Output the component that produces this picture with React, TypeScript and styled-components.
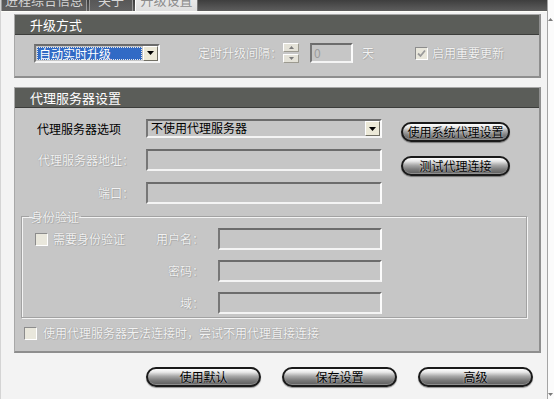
import React from 'react'
import styled, { createGlobalStyle } from 'styled-components'

const GlobalStyle = createGlobalStyle`
  html, body {
    margin: 0;
    padding: 0;
    background: #f3f3f3;
  }
  body {
    font-family: "Noto Sans CJK SC", "Noto Sans", sans-serif;
    font-size: 12px;
    line-height: 14px;
  }
`

const Window = styled.div`
  display: flex;
  width: 554px;
  height: 399px;
  overflow: hidden;
`

const Main = styled.div`
  width: 546px;
  display: flex;
  flex-direction: column;
  background: #f3f3f3;
  border-left: 1px solid #d4d4d4;
  overflow: hidden;
`

const ScrollStrip = styled.div`
  flex: 1;
  display: flex;
  flex-direction: column;
  justify-content: space-between;
  align-items: flex-end;
  padding: 18px 1px 3px 0;
  background: #fbfbfb;
  border-left: 1px solid #a4a4a4;
`

const TabBar = styled.div`
  height: 11px;
  background: linear-gradient(#3e3e3e, #5e5e5e);
  border-bottom: 1px solid #fdfdf8;
  overflow: hidden;
`

const TabRow = styled.div`
  display: flex;
  gap: 2px;
  height: 22px;
  margin-top: -11px;
`

const Tab = styled.div<{ $w: number; $active?: boolean }>`
  width: ${p => p.$w}px;
  box-sizing: border-box;
  text-align: center;
  font-size: 13px;
  line-height: 22px;
  color: ${p => (p.$active ? '#8c8c8c' : '#d6d6d6')};
  background: ${p => (p.$active ? 'linear-gradient(#f4f4f4, #dedede)' : 'linear-gradient(#4c4c4c, #626262)')};
  border-left: 1px solid ${p => (p.$active ? '#ffffff' : '#9a9a9a')};
  border-right: 1px solid ${p => (p.$active ? '#7a7a7a' : '#9a9a9a')};
`

const Content = styled.div`
  display: flex;
  flex-direction: column;
  padding: 2px 0 0 13px;
`

const Panel = styled.section`
  width: 527px;
  box-sizing: border-box;
  background: #c6c6c6;
  border-top: 1px solid #a8a8a8;
  border-left: 1px solid #a8a8a8;
  border-right: 2px solid #8e8e8e;
  border-bottom: 2px solid #8e8e8e;

  & + & {
    margin-top: 9px;
  }
`

const PanelHeader = styled.div`
  height: 19px;
  padding-left: 15px;
  background: #5b5d59;
  border-bottom: 1px solid #3c3d3b;
  color: #ffffff;
  font-size: 13px;
  line-height: 19px;
`

const UpgradeBody = styled.div`
  display: flex;
  align-items: center;
  height: 20px;
  padding: 8px 0 13px 19px;
`

const Label = styled.span<{ $disabled?: boolean }>`
  white-space: nowrap;
  font-size: 12px;
  line-height: 14px;
  color: ${p => (p.$disabled ? '#f2f2f2' : '#000000')};
  text-shadow: ${p => (p.$disabled ? '0 0 1px #8a8a8a, 1px 1px 0 #b4b4b4' : 'none')};
`

const FieldLabel = styled(Label)<{ $w: number; $left?: number }>`
  width: ${p => p.$w}px;
  box-sizing: border-box;
  text-align: ${p => (p.$left !== undefined ? 'left' : 'right')};
  padding-left: ${p => p.$left ?? 0}px;
`

const Sunken = styled.div<{ $w: number; $h?: number }>`
  width: ${p => p.$w}px;
  height: ${p => p.$h ?? 22}px;
  box-sizing: border-box;
  border-top: 2px solid #6c6c6c;
  border-left: 2px solid #777777;
  border-right: 2px solid #fbfbfb;
  border-bottom: 2px solid #f4f4f4;
  background: #c6c6c6;
`

const Combo = styled(Sunken)`
  display: flex;
  align-items: stretch;
`

const ComboText = styled.div<{ $selected?: boolean }>`
  flex: 1;
  padding-left: ${p => (p.$selected ? 2 : 3)}px;
  font-size: 12px;
  line-height: 13px;
  color: ${p => (p.$selected ? '#ffffff' : '#000000')};
  background: ${p => (p.$selected ? '#316ac5' : 'transparent')};
  outline: ${p => (p.$selected ? '1px dotted #e8e8e8' : 'none')};
  outline-offset: -1px;
  margin: ${p => (p.$selected ? '1px' : '0')};
`

const DropButton = styled.div`
  width: 15px;
  display: flex;
  align-items: center;
  justify-content: center;
  background: #ece9d8;
  border-left: 1px solid #ffffff;
  border-top: 1px solid #ffffff;
  border-right: 1px solid #716f64;
  border-bottom: 1px solid #716f64;
  box-sizing: border-box;
`

const Spinner = styled.div`
  display: flex;
  flex-direction: column;
  gap: 2px;
  width: 16px;
  margin: 0 11px 0 1px;
`

const SpinHalf = styled.div`
  height: 9px;
  display: flex;
  align-items: center;
  justify-content: center;
  background: #e4e2d8;
  border-top: 1px solid #ffffff;
  border-left: 1px solid #ffffff;
  border-right: 1px solid #9c9a90;
  border-bottom: 1px solid #9c9a90;
  box-sizing: border-box;
`

const DisabledValue = styled.div`
  padding-left: 2px;
  color: #9c9c9c;
  font-size: 12px;
  line-height: 16px;
`

const Box = styled.div`
  width: 13px;
  height: 13px;
  flex: none;
  box-sizing: border-box;
  border-top: 1px solid #8c8c8c;
  border-left: 1px solid #8c8c8c;
  border-right: 1px solid #ffffff;
  border-bottom: 1px solid #ffffff;
  background: #e9e7dc;
  display: flex;
  align-items: center;
  justify-content: center;
`

const CheckRow = styled.div<{ $gap: number }>`
  display: flex;
  align-items: center;
  gap: ${p => p.$gap}px;
`

const ProxyBody = styled.div`
  padding: 11px 0 11px 7px;
`

const ProxyTop = styled.div`
  display: flex;
`

const FieldColumn = styled.div`
  display: flex;
  flex-direction: column;
  gap: 11px;
`

const FieldRow = styled.div<{ $gap: number }>`
  display: flex;
  align-items: center;
  gap: ${p => p.$gap}px;
`

const SideButtons = styled.div`
  display: flex;
  flex-direction: column;
  gap: 14px;
  padding-top: 3px;
  margin-left: 19px;
`

const PillButton = styled.button<{ $w: number }>`
  width: ${p => p.$w}px;
  height: 20px;
  padding: 0;
  box-sizing: border-box;
  border: 2px solid #1a1a1a;
  border-radius: 10px;
  background: linear-gradient(#ffffff 0%, #e8e8e8 20%, #a8a8a8 45%, #7c7c7c 70%, #5c5c5c 100%);
  box-shadow: 0 1px 1px rgba(0, 0, 0, 0.4), inset 0 -1px 0 #8e8e8e;
  font-family: "Noto Sans CJK SC", "Noto Sans", sans-serif;
  font-size: 12px;
  line-height: 16px;
  color: #000000;
  text-shadow: 0 0 2px #e6e6e6;
`

const AuthSet = styled.fieldset`
  width: 506px;
  box-sizing: border-box;
  margin: 6px 0 0 -1px;
  padding: 5px 0 3px 0;
  border: 1px solid #a2a2a2;
  box-shadow: inset 1px 1px 0 #f4f4f4, 1px 1px 0 #f4f4f4;
  display: flex;
  flex-direction: column;
  gap: 10px;
`

const AuthLegend = styled.legend`
  margin-left: 7px;
  padding: 0 2px;
  font-size: 12px;
  line-height: 13px;
  color: #f2f2f2;
  text-shadow: 0 0 1px #8a8a8a, 1px 1px 0 #b4b4b4;
`

const AuthRow = styled.div`
  display: flex;
  align-items: center;
  height: 22px;
`

const AuthLead = styled.div`
  width: 118px;
  padding-left: 13px;
  box-sizing: border-box;
`

const FallbackRow = styled(CheckRow)`
  margin: 8px 0 0 2px;
`

const BottomBar = styled.div`
  display: flex;
  gap: 21px;
  margin: 14px 0 0 132px;
`

const Arrow = ({ down }: { down?: boolean }) => (
  <svg width="7" height="4" viewBox="0 0 7 4">
    <path d={down ? 'M0 0h7L3.5 4z' : 'M0 4h7L3.5 0z'} fill="#000" />
  </svg>
)

const TinyArrow = ({ down }: { down?: boolean }) => (
  <svg width="5" height="3" viewBox="0 0 5 3">
    <path d={down ? 'M0 0h5L2.5 3z' : 'M0 3h5L2.5 0z'} fill="#7a7a7a" />
  </svg>
)

const Tick = () => (
  <svg width="9" height="9" viewBox="0 0 9 9">
    <path d="M1 4.5l2.5 2.5L8 1.5" fill="none" stroke="#9a9a9a" strokeWidth="1.8" />
  </svg>
)

const App = () => (
  <>
    <GlobalStyle />
    <Window>
      <Main>
        <TabBar>
          <TabRow>
            <Tab $w={86}>进程综合信息</Tab>
            <Tab $w={44}>关于</Tab>
            <Tab $w={63} $active>升级设置</Tab>
          </TabRow>
        </TabBar>
        <Content>
          <Panel>
            <PanelHeader>升级方式</PanelHeader>
            <UpgradeBody>
              <Combo $w={126} $h={19}>
                <ComboText $selected>自动实时升级</ComboText>
                <DropButton>
                  <Arrow down />
                </DropButton>
              </Combo>
              <Label $disabled style={{ marginLeft: 38 }}>定时升级间隔：</Label>
              <Spinner>
                <SpinHalf>
                  <TinyArrow />
                </SpinHalf>
                <SpinHalf>
                  <TinyArrow down />
                </SpinHalf>
              </Spinner>
              <Sunken $w={43} $h={20}>
                <DisabledValue>0</DisabledValue>
              </Sunken>
              <Label $disabled style={{ marginLeft: 9 }}>天</Label>
              <CheckRow $gap={4} style={{ marginLeft: 41 }}>
                <Box>
                  <Tick />
                </Box>
                <Label $disabled>启用重要更新</Label>
              </CheckRow>
            </UpgradeBody>
          </Panel>

          <Panel>
            <PanelHeader>代理服务器设置</PanelHeader>
            <ProxyBody>
              <ProxyTop>
                <FieldColumn>
                  <FieldRow $gap={12}>
                    <FieldLabel $w={112} $left={15}>代理服务器选项</FieldLabel>
                    <Combo $w={236} $h={19}>
                      <ComboText>不使用代理服务器</ComboText>
                      <DropButton>
                        <Arrow down />
                      </DropButton>
                    </Combo>
                  </FieldRow>
                  <FieldRow $gap={12}>
                    <FieldLabel $w={112} $disabled>代理服务器地址：</FieldLabel>
                    <Sunken $w={236} />
                  </FieldRow>
                  <FieldRow $gap={12}>
                    <FieldLabel $w={112} $disabled>端口：</FieldLabel>
                    <Sunken $w={236} />
                  </FieldRow>
                </FieldColumn>
                <SideButtons>
                  <PillButton $w={109}>使用系统代理设置</PillButton>
                  <PillButton $w={109}>测试代理连接</PillButton>
                </SideButtons>
              </ProxyTop>

              <AuthSet>
                <AuthLegend>身份验证</AuthLegend>
                <AuthRow>
                  <AuthLead>
                    <CheckRow $gap={5}>
                      <Box />
                      <Label $disabled>需要身份验证</Label>
                    </CheckRow>
                  </AuthLead>
                  <FieldLabel $w={64} $disabled>用户名：</FieldLabel>
                  <Sunken $w={164} style={{ marginLeft: 14 }} />
                </AuthRow>
                <AuthRow>
                  <AuthLead />
                  <FieldLabel $w={64} $disabled>密码：</FieldLabel>
                  <Sunken $w={164} style={{ marginLeft: 14 }} />
                </AuthRow>
                <AuthRow>
                  <AuthLead />
                  <FieldLabel $w={64} $disabled>域：</FieldLabel>
                  <Sunken $w={164} style={{ marginLeft: 14 }} />
                </AuthRow>
              </AuthSet>

              <FallbackRow $gap={6}>
                <Box />
                <Label $disabled>使用代理服务器无法连接时，尝试不用代理直接连接</Label>
              </FallbackRow>
            </ProxyBody>
          </Panel>

          <BottomBar>
            <PillButton $w={115}>使用默认</PillButton>
            <PillButton $w={115}>保存设置</PillButton>
            <PillButton $w={115}>高级</PillButton>
          </BottomBar>
        </Content>
      </Main>
      <ScrollStrip>
        <TinyArrow />
        <TinyArrow down />
      </ScrollStrip>
    </Window>
  </>
)

export default App
